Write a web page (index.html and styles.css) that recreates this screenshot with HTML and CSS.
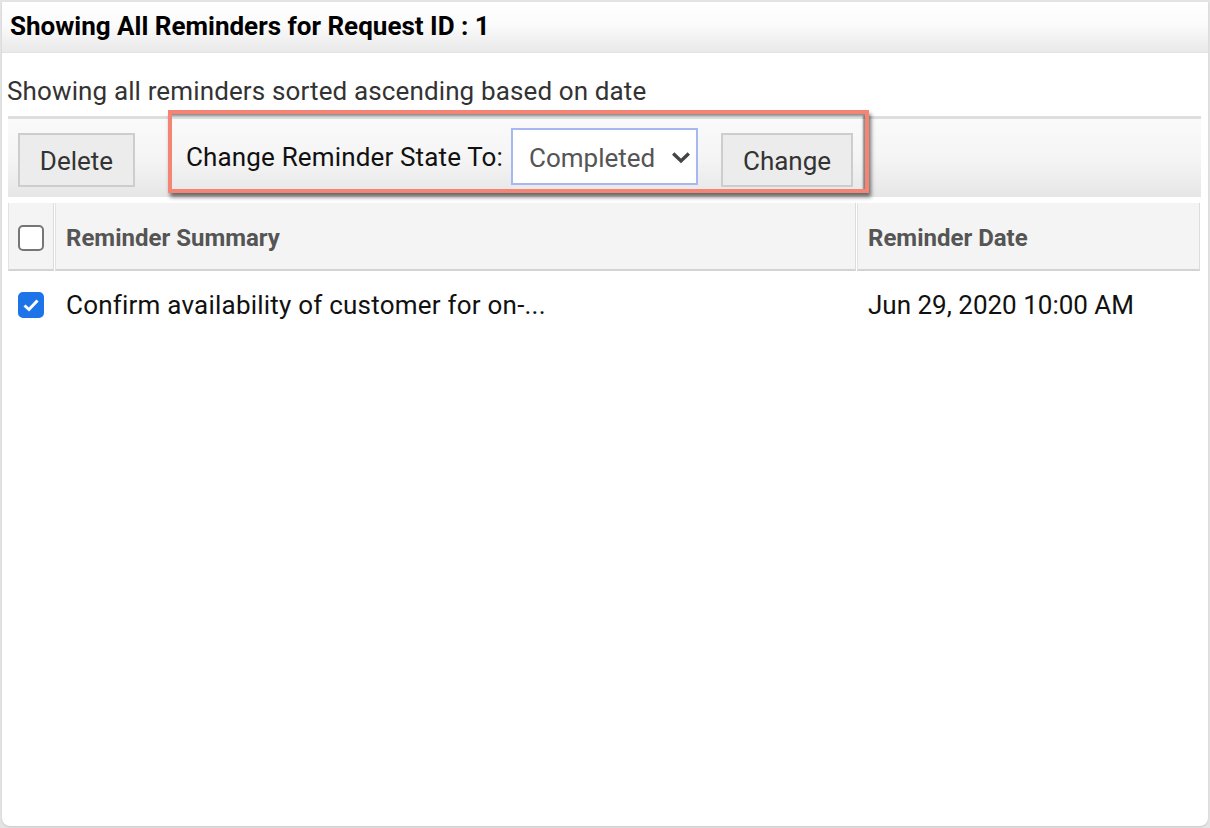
FILE: index.html
```html
<!DOCTYPE html>
<html>
<head>
<meta charset="utf-8">
<link rel="stylesheet" href="styles.css">
</head>
<body>
<div class="panel">
  <div class="header">Showing All Reminders for Request ID : 1</div>
  <div class="subtitle">Showing all reminders sorted ascending based on date</div>
  <div class="toolbar">
    <div class="btn btn-delete">Delete</div>
    <div class="highlight">
      <span class="label">Change Reminder State To:</span>
      <div class="select">
        <span>Completed</span>
        <svg class="chev" width="20" height="13" viewBox="0 0 20 13"><path d="M2.2 2.5 L10 10 L17.8 2.5" fill="none" stroke="#444" stroke-width="3.4"/></svg>
      </div>
      <div class="btn btn-change">Change</div>
    </div>
  </div>
  <div class="table">
    <div class="th th-check"><span class="cb"></span></div>
    <div class="th">Reminder Summary</div>
    <div class="th">Reminder Date</div>
    <div class="td td-check"><span class="cb cb-on"><svg width="18" height="14" viewBox="0 0 18 14"><path d="M2.5 7.5 L7 11.5 L15.5 2.5" fill="none" stroke="#fff" stroke-width="3"/></svg></span></div>
    <div class="td td-summary">Confirm availability of customer for on-...</div>
    <div class="td">Jun 29, 2020 10:00 AM</div>
  </div>
</div>
</body>
</html>
```
FILE: styles.css
```css
* { box-sizing: border-box; }
html, body { margin: 0; padding: 0; }
body {
  background: #e4e4e4;
  font-family: Roboto, "Liberation Sans", Arial, sans-serif;
  width: 1210px;
  height: 828px;
  overflow: hidden;
}
.panel {
  margin: 2px 2px 0 2px;
  width: 1206px;
  height: 824px;
  background: #fff;
  border-radius: 0 0 8px 8px;
  box-shadow: 0 1px 2px rgba(0,0,0,0.12);
}
.header {
  height: 51px;
  padding: 9px 0 0 8px;
  font-weight: 700;
  font-size: 26px;
  line-height: 30px;
  color: #000;
  background: linear-gradient(#ffffff 0%, #fbfbfb 45%, #e9e9e9 100%);
  border-bottom: 1px solid #e2e2e2;
}
.subtitle {
  height: 63px;
  padding: 23px 0 0 5px;
  font-size: 26px;
  line-height: 30px;
  letter-spacing: 0.13px;
  color: #333;
}
.toolbar {
  margin: 0 7px 0 6px;
  height: 81px;
  border-top: 3px solid #dedede;
  background: linear-gradient(#fafafa 0%, #f5f5f5 50%, #e6e6e6 100%);
  display: flex;
  align-items: flex-start;
  padding-left: 10px;
}
.btn {
  height: 54px;
  margin-top: 14px;
  background: #ececec;
  border: 2px solid #cdcdcd;
  font-size: 26px;
  color: #333;
  display: flex;
  align-items: center;
  justify-content: center;
  padding-top: 2px;
}
.btn-delete { width: 117px; }
.btn-change { width: 132px; margin-left: 23px; }
.highlight {
  margin-left: 33px;
  margin-top: -9px;
  width: 701px;
  height: 83px;
  border: 4px solid #f48474;
  box-shadow: 2px 4px 4px rgba(0,0,0,0.55), inset -2px 2px 2px rgba(0,0,0,0.45);
  display: flex;
  align-items: flex-start;
  padding-left: 14px;
}
.label {
  font-size: 26px;
  line-height: 30px;
  letter-spacing: 0.15px;
  color: #111;
  margin-top: 28px;
}
.select {
  margin-left: 8px;
  margin-top: 14px;
  width: 187px;
  height: 57px;
  background: #fff;
  border: 2px solid #a6b7f2;
  display: flex;
  align-items: center;
  padding-left: 16px;
  font-size: 26px;
  color: #555;
}
.select span { padding-top: 2px; }
.chev { margin-left: 16px; margin-top: 2px; }
.highlight .btn-change { margin-top: 19px; }
.table {
  margin: 6px 7px 0 6px;
  display: grid;
  grid-template-columns: 47px 802px 1fr;
  column-gap: 0;
}
.th {
  height: 68px;
  background: #f4f4f4;
  border-left: 1px solid #e2e2e2;
  border-right: 1px solid #dcdcdc;
  border-bottom: 2px solid #d3d3d3;
  font-weight: 700;
  font-size: 24px;
  color: #555;
  display: flex;
  align-items: center;
  padding: 4px 0 0 10px;
  margin-right: 1px;
}
.th:last-child { margin-right: 0; }
.th-check { padding-left: 9px; }
.td {
  height: 68px;
  display: flex;
  align-items: center;
  padding-left: 11px;
  font-size: 26px;
  color: #111;
}
.td-summary { letter-spacing: 0.22px; }
.td-check { padding-left: 10px; }
.cb {
  display: inline-flex;
  align-items: center;
  justify-content: center;
  width: 26px;
  height: 26px;
  border: 2px solid #767676;
  border-radius: 5px;
  background: #fff;
}
.cb-on {
  background: #1d74e9;
  border-color: #1d74e9;
}
```
